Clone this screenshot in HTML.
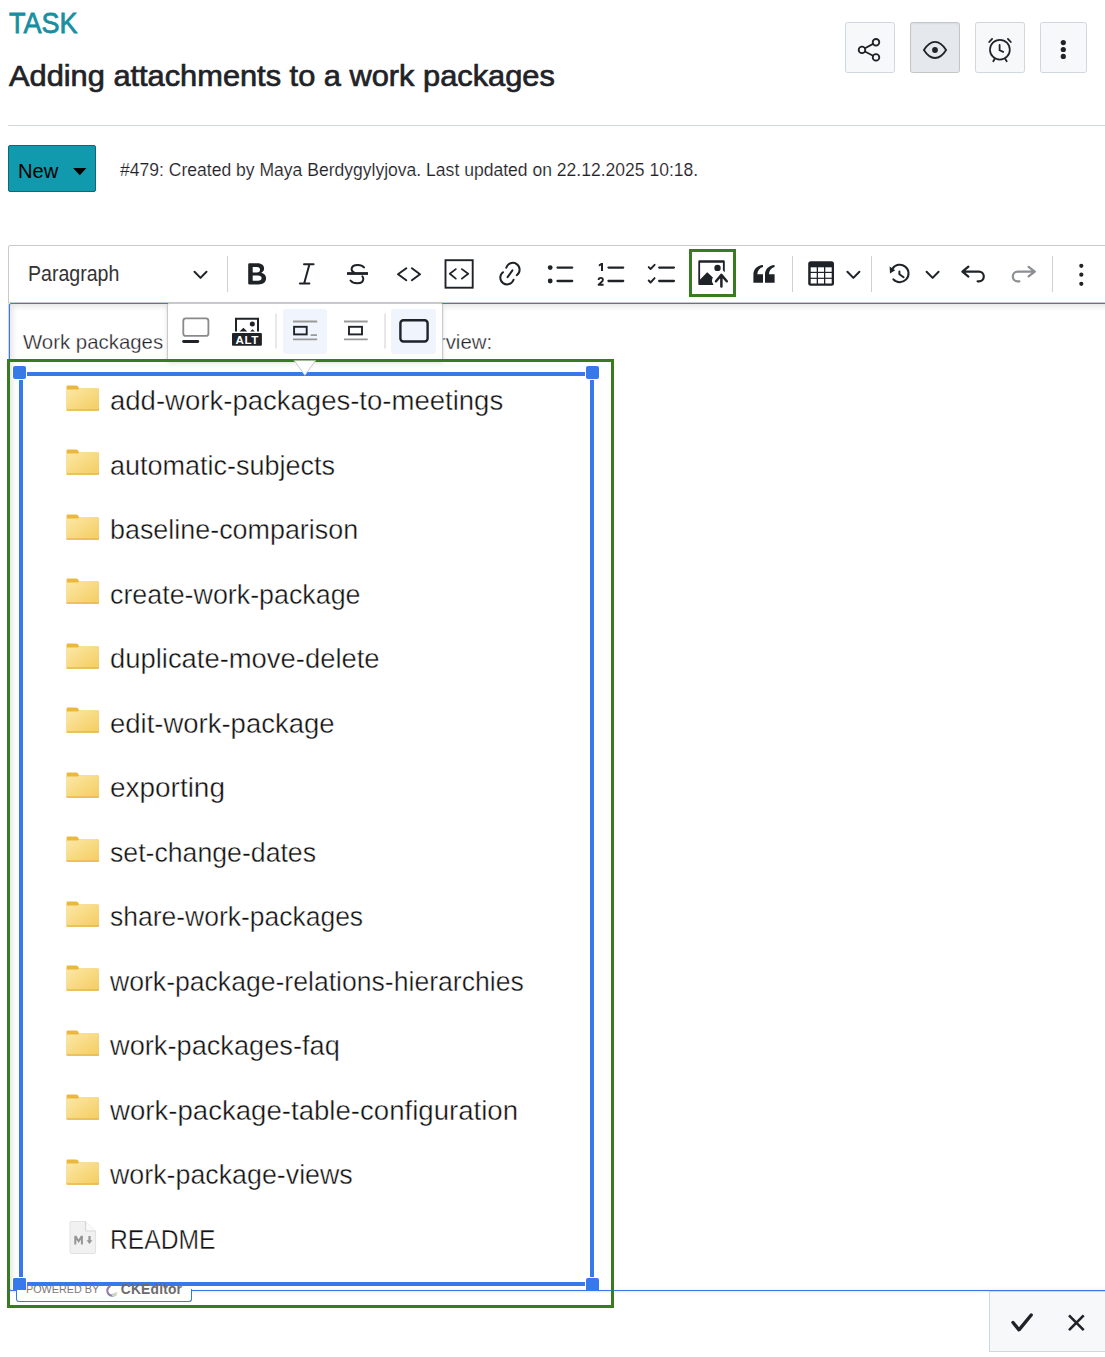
<!DOCTYPE html>
<html><head><meta charset="utf-8"><style>
html,body{margin:0;padding:0;background:#fff;}
body{width:1105px;height:1357px;overflow:hidden;position:relative;font-family:"Liberation Sans",sans-serif;}
.t{position:absolute;white-space:nowrap;transform-origin:0 0;}
.b{position:absolute;box-sizing:border-box;}
svg{position:absolute;left:0;top:0;overflow:visible;}
</style></head><body>
<div class="t" style="left:9.00px;top:4.70px;font-size:30px;line-height:36px;color:#178fa1;font-weight:400;transform:scaleX(0.9);-webkit-text-stroke:0.8px #178fa1;">TASK</div>
<div class="t" style="left:9.30px;top:58.01px;font-size:30px;line-height:36px;color:#1f2328;font-weight:400;transform:scaleX(1.026);-webkit-text-stroke:0.7px #1f2328;">Adding attachments to a work packages</div>
<div class="b" style="left:845px;top:22px;width:50px;height:51px;background:#f6f8fa;border:1px solid #d0d7de;border-radius:2.5px;"></div>
<div class="b" style="left:910px;top:22px;width:50px;height:51px;background:#e5e8ec;border:1px solid #c4c5c7;border-radius:2.5px;box-shadow:inset 0 1px 2px rgba(0,0,0,0.06);"></div>
<div class="b" style="left:975px;top:22px;width:50px;height:51px;background:#f6f8fa;border:1px solid #d0d7de;border-radius:2.5px;"></div>
<div class="b" style="left:1040px;top:22px;width:47px;height:51px;background:#f6f8fa;border:1px solid #d0d7de;border-radius:2.5px;"></div>
<div class="b" style="left:8px;top:125px;width:1097px;height:1px;background:#d1d9e0;"></div>
<div class="b" style="left:8px;top:145px;width:88px;height:47px;background:#1199ae;border:1px solid #0c6977;border-radius:2px;"></div>
<div class="t" style="left:17.50px;top:158.40px;font-size:20.5px;line-height:25px;color:#000;font-weight:400;transform:scaleX(0.98);">New</div>
<div class="t" style="left:119.50px;top:159.12px;font-size:18.7px;line-height:22px;color:#1f2328;font-weight:400;transform:scaleX(0.9385);-webkit-text-stroke:0.15px #fff;">#479: Created by Maya Berdygylyjova. Last updated on 22.12.2025 10:18.</div>
<div class="b" style="left:8px;top:245px;width:1120px;height:58px;border:1px solid #c9cacd;border-radius:2px;background:#fff;"></div>
<div class="t" style="left:28.00px;top:260.65px;font-size:21.5px;line-height:26px;color:#333;font-weight:400;transform:scaleX(0.91);">Paragraph</div>
<div class="b" style="left:8px;top:302px;width:1px;height:990px;background:#d3d4d6;"></div>
<div class="b" style="left:9px;top:303px;width:1120px;height:988px;border:1px solid #3779eb;border-radius:2px;box-shadow:2px 2px 6px rgba(0,0,0,0.12) inset;"></div>
<div class="t" style="left:23.00px;top:329.02px;font-size:21px;line-height:25px;color:#1f2328;font-weight:400;transform:scaleX(0.9708);-webkit-text-stroke:0.3px #fff;">Work packages</div>
<div class="t" style="left:405.50px;top:329.12px;font-size:21px;line-height:25px;color:#1f2328;font-weight:400;transform:scaleX(0.9708);-webkit-text-stroke:0.3px #fff;">overview:</div>
<svg width="35.4" height="27" style="left:65.1px;top:384.6px" viewBox="0 0 34 27" preserveAspectRatio="none">
<defs><linearGradient id="fg0" x1="0" y1="0" x2="1" y2="1"><stop offset="0" stop-color="#fbe7a6"/><stop offset="1" stop-color="#f4cd5f"/></linearGradient></defs>
<path d="M1.5 1.2 Q1.5 0.4 2.5 0.4 H10.5 Q11.8 0.4 12.6 1.6 L13.6 3.4 H31.5 Q32.6 3.4 32.6 4.4 V24.6 Q32.6 25.6 31.5 25.6 H2.5 Q1.5 25.6 1.5 24.6 Z" fill="#ebb83f"/>
<path d="M1.5 5.6 Q1.5 4.6 2.5 4.6 H12.4 L13.6 3.4 H31.5 Q32.6 3.4 32.6 4.4 V24.6 Q32.6 25.6 31.5 25.6 H2.5 Q1.5 25.6 1.5 24.6 Z" fill="url(#fg0)"/>
<rect x="1.5" y="24.4" width="31.1" height="1.2" fill="#e3b449"/>
</svg>
<div class="t" style="left:109.80px;top:383.16px;font-size:28.4px;line-height:34px;color:#111;font-weight:400;transform:scaleX(0.9695492957746481);-webkit-text-stroke:0.4px #fff;">add-work-packages-to-meetings</div>
<svg width="35.4" height="27" style="left:65.1px;top:449.1px" viewBox="0 0 34 27" preserveAspectRatio="none">
<defs><linearGradient id="fg1" x1="0" y1="0" x2="1" y2="1"><stop offset="0" stop-color="#fbe7a6"/><stop offset="1" stop-color="#f4cd5f"/></linearGradient></defs>
<path d="M1.5 1.2 Q1.5 0.4 2.5 0.4 H10.5 Q11.8 0.4 12.6 1.6 L13.6 3.4 H31.5 Q32.6 3.4 32.6 4.4 V24.6 Q32.6 25.6 31.5 25.6 H2.5 Q1.5 25.6 1.5 24.6 Z" fill="#ebb83f"/>
<path d="M1.5 5.6 Q1.5 4.6 2.5 4.6 H12.4 L13.6 3.4 H31.5 Q32.6 3.4 32.6 4.4 V24.6 Q32.6 25.6 31.5 25.6 H2.5 Q1.5 25.6 1.5 24.6 Z" fill="url(#fg1)"/>
<rect x="1.5" y="24.4" width="31.1" height="1.2" fill="#e3b449"/>
</svg>
<div class="t" style="left:109.80px;top:447.68px;font-size:28.4px;line-height:34px;color:#111;font-weight:400;transform:scaleX(0.9511126760563381);-webkit-text-stroke:0.4px #fff;">automatic-subjects</div>
<svg width="35.4" height="27" style="left:65.1px;top:513.6px" viewBox="0 0 34 27" preserveAspectRatio="none">
<defs><linearGradient id="fg2" x1="0" y1="0" x2="1" y2="1"><stop offset="0" stop-color="#fbe7a6"/><stop offset="1" stop-color="#f4cd5f"/></linearGradient></defs>
<path d="M1.5 1.2 Q1.5 0.4 2.5 0.4 H10.5 Q11.8 0.4 12.6 1.6 L13.6 3.4 H31.5 Q32.6 3.4 32.6 4.4 V24.6 Q32.6 25.6 31.5 25.6 H2.5 Q1.5 25.6 1.5 24.6 Z" fill="#ebb83f"/>
<path d="M1.5 5.6 Q1.5 4.6 2.5 4.6 H12.4 L13.6 3.4 H31.5 Q32.6 3.4 32.6 4.4 V24.6 Q32.6 25.6 31.5 25.6 H2.5 Q1.5 25.6 1.5 24.6 Z" fill="url(#fg2)"/>
<rect x="1.5" y="24.4" width="31.1" height="1.2" fill="#e3b449"/>
</svg>
<div class="t" style="left:109.80px;top:512.21px;font-size:28.4px;line-height:34px;color:#111;font-weight:400;transform:scaleX(0.9472676056338029);-webkit-text-stroke:0.4px #fff;">baseline-comparison</div>
<svg width="35.4" height="27" style="left:65.1px;top:578.2px" viewBox="0 0 34 27" preserveAspectRatio="none">
<defs><linearGradient id="fg3" x1="0" y1="0" x2="1" y2="1"><stop offset="0" stop-color="#fbe7a6"/><stop offset="1" stop-color="#f4cd5f"/></linearGradient></defs>
<path d="M1.5 1.2 Q1.5 0.4 2.5 0.4 H10.5 Q11.8 0.4 12.6 1.6 L13.6 3.4 H31.5 Q32.6 3.4 32.6 4.4 V24.6 Q32.6 25.6 31.5 25.6 H2.5 Q1.5 25.6 1.5 24.6 Z" fill="#ebb83f"/>
<path d="M1.5 5.6 Q1.5 4.6 2.5 4.6 H12.4 L13.6 3.4 H31.5 Q32.6 3.4 32.6 4.4 V24.6 Q32.6 25.6 31.5 25.6 H2.5 Q1.5 25.6 1.5 24.6 Z" fill="url(#fg3)"/>
<rect x="1.5" y="24.4" width="31.1" height="1.2" fill="#e3b449"/>
</svg>
<div class="t" style="left:109.80px;top:576.73px;font-size:28.4px;line-height:34px;color:#111;font-weight:400;transform:scaleX(0.9450000000000001);-webkit-text-stroke:0.4px #fff;">create-work-package</div>
<svg width="35.4" height="27" style="left:65.1px;top:642.7px" viewBox="0 0 34 27" preserveAspectRatio="none">
<defs><linearGradient id="fg4" x1="0" y1="0" x2="1" y2="1"><stop offset="0" stop-color="#fbe7a6"/><stop offset="1" stop-color="#f4cd5f"/></linearGradient></defs>
<path d="M1.5 1.2 Q1.5 0.4 2.5 0.4 H10.5 Q11.8 0.4 12.6 1.6 L13.6 3.4 H31.5 Q32.6 3.4 32.6 4.4 V24.6 Q32.6 25.6 31.5 25.6 H2.5 Q1.5 25.6 1.5 24.6 Z" fill="#ebb83f"/>
<path d="M1.5 5.6 Q1.5 4.6 2.5 4.6 H12.4 L13.6 3.4 H31.5 Q32.6 3.4 32.6 4.4 V24.6 Q32.6 25.6 31.5 25.6 H2.5 Q1.5 25.6 1.5 24.6 Z" fill="url(#fg4)"/>
<rect x="1.5" y="24.4" width="31.1" height="1.2" fill="#e3b449"/>
</svg>
<div class="t" style="left:109.80px;top:641.26px;font-size:28.4px;line-height:34px;color:#111;font-weight:400;transform:scaleX(0.9650140845070424);-webkit-text-stroke:0.4px #fff;">duplicate-move-delete</div>
<svg width="35.4" height="27" style="left:65.1px;top:707.2px" viewBox="0 0 34 27" preserveAspectRatio="none">
<defs><linearGradient id="fg5" x1="0" y1="0" x2="1" y2="1"><stop offset="0" stop-color="#fbe7a6"/><stop offset="1" stop-color="#f4cd5f"/></linearGradient></defs>
<path d="M1.5 1.2 Q1.5 0.4 2.5 0.4 H10.5 Q11.8 0.4 12.6 1.6 L13.6 3.4 H31.5 Q32.6 3.4 32.6 4.4 V24.6 Q32.6 25.6 31.5 25.6 H2.5 Q1.5 25.6 1.5 24.6 Z" fill="#ebb83f"/>
<path d="M1.5 5.6 Q1.5 4.6 2.5 4.6 H12.4 L13.6 3.4 H31.5 Q32.6 3.4 32.6 4.4 V24.6 Q32.6 25.6 31.5 25.6 H2.5 Q1.5 25.6 1.5 24.6 Z" fill="url(#fg5)"/>
<rect x="1.5" y="24.4" width="31.1" height="1.2" fill="#e3b449"/>
</svg>
<div class="t" style="left:109.80px;top:705.78px;font-size:28.4px;line-height:34px;color:#111;font-weight:400;transform:scaleX(0.9676760563380282);-webkit-text-stroke:0.4px #fff;">edit-work-package</div>
<svg width="35.4" height="27" style="left:65.1px;top:771.8px" viewBox="0 0 34 27" preserveAspectRatio="none">
<defs><linearGradient id="fg6" x1="0" y1="0" x2="1" y2="1"><stop offset="0" stop-color="#fbe7a6"/><stop offset="1" stop-color="#f4cd5f"/></linearGradient></defs>
<path d="M1.5 1.2 Q1.5 0.4 2.5 0.4 H10.5 Q11.8 0.4 12.6 1.6 L13.6 3.4 H31.5 Q32.6 3.4 32.6 4.4 V24.6 Q32.6 25.6 31.5 25.6 H2.5 Q1.5 25.6 1.5 24.6 Z" fill="#ebb83f"/>
<path d="M1.5 5.6 Q1.5 4.6 2.5 4.6 H12.4 L13.6 3.4 H31.5 Q32.6 3.4 32.6 4.4 V24.6 Q32.6 25.6 31.5 25.6 H2.5 Q1.5 25.6 1.5 24.6 Z" fill="url(#fg6)"/>
<rect x="1.5" y="24.4" width="31.1" height="1.2" fill="#e3b449"/>
</svg>
<div class="t" style="left:109.80px;top:770.31px;font-size:28.4px;line-height:34px;color:#111;font-weight:400;transform:scaleX(0.9842394366197182);-webkit-text-stroke:0.4px #fff;">exporting</div>
<svg width="35.4" height="27" style="left:65.1px;top:836.3px" viewBox="0 0 34 27" preserveAspectRatio="none">
<defs><linearGradient id="fg7" x1="0" y1="0" x2="1" y2="1"><stop offset="0" stop-color="#fbe7a6"/><stop offset="1" stop-color="#f4cd5f"/></linearGradient></defs>
<path d="M1.5 1.2 Q1.5 0.4 2.5 0.4 H10.5 Q11.8 0.4 12.6 1.6 L13.6 3.4 H31.5 Q32.6 3.4 32.6 4.4 V24.6 Q32.6 25.6 31.5 25.6 H2.5 Q1.5 25.6 1.5 24.6 Z" fill="#ebb83f"/>
<path d="M1.5 5.6 Q1.5 4.6 2.5 4.6 H12.4 L13.6 3.4 H31.5 Q32.6 3.4 32.6 4.4 V24.6 Q32.6 25.6 31.5 25.6 H2.5 Q1.5 25.6 1.5 24.6 Z" fill="url(#fg7)"/>
<rect x="1.5" y="24.4" width="31.1" height="1.2" fill="#e3b449"/>
</svg>
<div class="t" style="left:109.80px;top:834.83px;font-size:28.4px;line-height:34px;color:#111;font-weight:400;transform:scaleX(0.9391830985915492);-webkit-text-stroke:0.4px #fff;">set-change-dates</div>
<svg width="35.4" height="27" style="left:65.1px;top:900.8px" viewBox="0 0 34 27" preserveAspectRatio="none">
<defs><linearGradient id="fg8" x1="0" y1="0" x2="1" y2="1"><stop offset="0" stop-color="#fbe7a6"/><stop offset="1" stop-color="#f4cd5f"/></linearGradient></defs>
<path d="M1.5 1.2 Q1.5 0.4 2.5 0.4 H10.5 Q11.8 0.4 12.6 1.6 L13.6 3.4 H31.5 Q32.6 3.4 32.6 4.4 V24.6 Q32.6 25.6 31.5 25.6 H2.5 Q1.5 25.6 1.5 24.6 Z" fill="#ebb83f"/>
<path d="M1.5 5.6 Q1.5 4.6 2.5 4.6 H12.4 L13.6 3.4 H31.5 Q32.6 3.4 32.6 4.4 V24.6 Q32.6 25.6 31.5 25.6 H2.5 Q1.5 25.6 1.5 24.6 Z" fill="url(#fg8)"/>
<rect x="1.5" y="24.4" width="31.1" height="1.2" fill="#e3b449"/>
</svg>
<div class="t" style="left:109.80px;top:899.36px;font-size:28.4px;line-height:34px;color:#111;font-weight:400;transform:scaleX(0.9325774647887324);-webkit-text-stroke:0.4px #fff;">share-work-packages</div>
<svg width="35.4" height="27" style="left:65.1px;top:965.3px" viewBox="0 0 34 27" preserveAspectRatio="none">
<defs><linearGradient id="fg9" x1="0" y1="0" x2="1" y2="1"><stop offset="0" stop-color="#fbe7a6"/><stop offset="1" stop-color="#f4cd5f"/></linearGradient></defs>
<path d="M1.5 1.2 Q1.5 0.4 2.5 0.4 H10.5 Q11.8 0.4 12.6 1.6 L13.6 3.4 H31.5 Q32.6 3.4 32.6 4.4 V24.6 Q32.6 25.6 31.5 25.6 H2.5 Q1.5 25.6 1.5 24.6 Z" fill="#ebb83f"/>
<path d="M1.5 5.6 Q1.5 4.6 2.5 4.6 H12.4 L13.6 3.4 H31.5 Q32.6 3.4 32.6 4.4 V24.6 Q32.6 25.6 31.5 25.6 H2.5 Q1.5 25.6 1.5 24.6 Z" fill="url(#fg9)"/>
<rect x="1.5" y="24.4" width="31.1" height="1.2" fill="#e3b449"/>
</svg>
<div class="t" style="left:109.80px;top:963.88px;font-size:28.4px;line-height:34px;color:#111;font-weight:400;transform:scaleX(0.9365211267605634);-webkit-text-stroke:0.4px #fff;">work-package-relations-hierarchies</div>
<svg width="35.4" height="27" style="left:65.1px;top:1029.8px" viewBox="0 0 34 27" preserveAspectRatio="none">
<defs><linearGradient id="fg10" x1="0" y1="0" x2="1" y2="1"><stop offset="0" stop-color="#fbe7a6"/><stop offset="1" stop-color="#f4cd5f"/></linearGradient></defs>
<path d="M1.5 1.2 Q1.5 0.4 2.5 0.4 H10.5 Q11.8 0.4 12.6 1.6 L13.6 3.4 H31.5 Q32.6 3.4 32.6 4.4 V24.6 Q32.6 25.6 31.5 25.6 H2.5 Q1.5 25.6 1.5 24.6 Z" fill="#ebb83f"/>
<path d="M1.5 5.6 Q1.5 4.6 2.5 4.6 H12.4 L13.6 3.4 H31.5 Q32.6 3.4 32.6 4.4 V24.6 Q32.6 25.6 31.5 25.6 H2.5 Q1.5 25.6 1.5 24.6 Z" fill="url(#fg10)"/>
<rect x="1.5" y="24.4" width="31.1" height="1.2" fill="#e3b449"/>
</svg>
<div class="t" style="left:109.80px;top:1028.41px;font-size:28.4px;line-height:34px;color:#111;font-weight:400;transform:scaleX(0.9583098591549296);-webkit-text-stroke:0.4px #fff;">work-packages-faq</div>
<svg width="35.4" height="27" style="left:65.1px;top:1094.4px" viewBox="0 0 34 27" preserveAspectRatio="none">
<defs><linearGradient id="fg11" x1="0" y1="0" x2="1" y2="1"><stop offset="0" stop-color="#fbe7a6"/><stop offset="1" stop-color="#f4cd5f"/></linearGradient></defs>
<path d="M1.5 1.2 Q1.5 0.4 2.5 0.4 H10.5 Q11.8 0.4 12.6 1.6 L13.6 3.4 H31.5 Q32.6 3.4 32.6 4.4 V24.6 Q32.6 25.6 31.5 25.6 H2.5 Q1.5 25.6 1.5 24.6 Z" fill="#ebb83f"/>
<path d="M1.5 5.6 Q1.5 4.6 2.5 4.6 H12.4 L13.6 3.4 H31.5 Q32.6 3.4 32.6 4.4 V24.6 Q32.6 25.6 31.5 25.6 H2.5 Q1.5 25.6 1.5 24.6 Z" fill="url(#fg11)"/>
<rect x="1.5" y="24.4" width="31.1" height="1.2" fill="#e3b449"/>
</svg>
<div class="t" style="left:109.80px;top:1092.93px;font-size:28.4px;line-height:34px;color:#111;font-weight:400;transform:scaleX(0.9720140845070423);-webkit-text-stroke:0.4px #fff;">work-package-table-configuration</div>
<svg width="35.4" height="27" style="left:65.1px;top:1158.9px" viewBox="0 0 34 27" preserveAspectRatio="none">
<defs><linearGradient id="fg12" x1="0" y1="0" x2="1" y2="1"><stop offset="0" stop-color="#fbe7a6"/><stop offset="1" stop-color="#f4cd5f"/></linearGradient></defs>
<path d="M1.5 1.2 Q1.5 0.4 2.5 0.4 H10.5 Q11.8 0.4 12.6 1.6 L13.6 3.4 H31.5 Q32.6 3.4 32.6 4.4 V24.6 Q32.6 25.6 31.5 25.6 H2.5 Q1.5 25.6 1.5 24.6 Z" fill="#ebb83f"/>
<path d="M1.5 5.6 Q1.5 4.6 2.5 4.6 H12.4 L13.6 3.4 H31.5 Q32.6 3.4 32.6 4.4 V24.6 Q32.6 25.6 31.5 25.6 H2.5 Q1.5 25.6 1.5 24.6 Z" fill="url(#fg12)"/>
<rect x="1.5" y="24.4" width="31.1" height="1.2" fill="#e3b449"/>
</svg>
<div class="t" style="left:109.80px;top:1157.46px;font-size:28.4px;line-height:34px;color:#111;font-weight:400;transform:scaleX(0.9439154929577466);-webkit-text-stroke:0.4px #fff;">work-package-views</div>
<svg width="30" height="36" style="left:68px;top:1219.8px" viewBox="0 0 30 36">
<path d="M2.5 1.5 H17.5 L27.5 11 V32 Q27.5 33.5 26 33.5 H3.5 Q2 33.5 2 32 V2.5 Q2 1.5 3 1.5 Z" fill="#f1f1f1" stroke="#e2e2e2" stroke-width="1"/>
<path d="M17.5 1.5 V9.5 Q17.5 11 19 11 H27.5" fill="#fafafa" stroke="#d6d6d6" stroke-width="1.2"/>
<path transform="translate(0 0.9)" d="M6.3 23.6 V14.8 H8.4 L10.6 18.6 L12.8 14.8 H14.9 V23.6 H12.9 V18.5 L10.6 22.2 L8.3 18.5 V23.6 Z" fill="#959595"/>
<path transform="translate(0 0.9)" d="M20.4 15.2 V19.4 H18.6 L21.5 23 L24.4 19.4 H22.6 V15.2 Z" fill="#959595"/>
</svg>
<div class="t" style="left:110.20px;top:1221.98px;font-size:28.4px;line-height:34px;color:#111;font-weight:400;transform:scaleX(0.8679014084507042);-webkit-text-stroke:0.4px #fff;">README</div>
<div class="b" style="left:27px;top:372px;width:558px;height:4px;background:#3779eb;"></div>
<div class="b" style="left:27px;top:1282px;width:558px;height:4px;background:#3779eb;"></div>
<div class="b" style="left:19px;top:380px;width:4px;height:897px;background:#3779eb;"></div>
<div class="b" style="left:590px;top:380px;width:4px;height:897px;background:#3779eb;"></div>
<div class="b" style="left:13px;top:366px;width:13px;height:13px;background:#3779eb;border-radius:2px;box-shadow:0 0 0 1px rgba(255,255,255,0.8);"></div>
<div class="b" style="left:586px;top:366px;width:13px;height:13px;background:#3779eb;border-radius:2px;box-shadow:0 0 0 1px rgba(255,255,255,0.8);"></div>
<div class="b" style="left:13px;top:1278px;width:13px;height:12px;background:#3779eb;border-radius:2px 2px 0 0;box-shadow:0 0 0 1px rgba(255,255,255,0.8);"></div>
<div class="b" style="left:586px;top:1278px;width:13px;height:12px;background:#3779eb;border-radius:2px 2px 0 0;box-shadow:0 0 0 1px rgba(255,255,255,0.8);"></div>
<div class="b" style="left:9px;top:1291px;width:1100px;height:20px;background:#fff;"></div>
<div class="b" style="left:9px;top:1290px;width:1100px;height:1px;background:#3779eb;"></div>
<div class="b" style="left:9px;top:1291px;width:1100px;height:2px;background:linear-gradient(#e3e4e6,#fff);"></div>
<div class="b" style="left:16px;top:1289px;width:176px;height:13px;border:1px solid #3779eb;border-top:none;border-radius:0 0 3px 3px;background:#fff;"></div>
<div class="b" style="left:13px;top:1278px;width:13px;height:12px;background:#3779eb;border-radius:2px 2px 0 0;"></div>
<div class="b" style="left:27px;top:1282px;width:558px;height:4px;background:#3779eb;"></div>
<div class="t" style="left:25.50px;top:1284.24px;font-size:10px;line-height:12px;color:#7a7a7a;font-weight:400;transform:scaleX(1.08);">POWERED BY</div>
<div class="b" style="left:989px;top:1291px;width:130px;height:61px;background:#f6f8fa;border:1px solid #d0d7de;"></div>
<div class="b" style="left:167px;top:303px;width:276px;height:58px;background:#fff;border:1px solid #c9cacd;border-radius:2px;box-shadow:0 1px 2px rgba(0,0,0,0.12),0 3px 6px rgba(0,0,0,0.08);"></div>
<div class="b" style="left:283px;top:309px;width:44px;height:45px;background:#f0f5fd;border-radius:3px;"></div>
<div class="b" style="left:391px;top:309px;width:45px;height:45px;background:#f0f5fd;border-radius:3px;"></div>
<div class="b" style="left:689px;top:249px;width:47px;height:48px;border:3px solid #387c22;"></div>
<div class="b" style="left:7px;top:359px;width:607px;height:949px;border:3px solid #387c22;"></div>
<svg width="1105" height="1357" viewBox="0 0 1105 1357"><g fill="none" stroke="#1f2328" stroke-width="1.8" stroke-linecap="round"><circle cx="862" cy="49.9" r="3.3"/><circle cx="876" cy="42.3" r="3.3"/><circle cx="876" cy="57.4" r="3.3"/><path d="M864.9 48.3 L873.1 43.9 M864.9 51.5 L873.1 55.8"/><path d="M923.9 50 C927 45 931 41.8 935 41.8 C939 41.8 943 45 946.1 50 C943 55 939 58 935 58 C931 58 927 55 923.9 50 Z"/><circle cx="999.9" cy="49.7" r="9.9" stroke-width="1.7"/><path d="M989.2 42 L992.1 38.9 M1007.9 38.9 L1010.8 42 M999.6 45 V50.2 L1003.2 51.9 M994.6 59 L993.3 61.2 M1005.3 59 L1006.7 61.2"/></g><g fill="#1f2328"><circle cx="935" cy="50" r="2.9"/><circle cx="1063.3" cy="42.6" r="2.6"/><circle cx="1063.3" cy="49.5" r="2.6"/><circle cx="1063.3" cy="56.4" r="2.6"/></g><path d="M73 168 H86.5 L79.75 175.2 Z" fill="#000"/><rect x="227.0" y="256" width="1" height="36" fill="#cfd0d2"/><rect x="792.0" y="256" width="1" height="36" fill="#cfd0d2"/><rect x="871.0" y="256" width="1" height="36" fill="#cfd0d2"/><rect x="1052.0" y="256" width="1" height="36" fill="#cfd0d2"/><path d="M194.5 271.8 L200.5 277.9 L206.5 271.8" fill="none" stroke="#1f2328" stroke-width="2" stroke-linecap="round" stroke-linejoin="round"/><path d="M847.4 271.8 L853.4 277.9 L859.4 271.8" fill="none" stroke="#1f2328" stroke-width="2" stroke-linecap="round" stroke-linejoin="round"/><path d="M926.6 271.8 L932.6 277.9 L938.6 271.8" fill="none" stroke="#1f2328" stroke-width="2" stroke-linecap="round" stroke-linejoin="round"/><path fill="#1f2328" fill-rule="evenodd" d="M248.2 264.6 Q248.2 263.3 249.5 263.3 H257.4 C261.9 263.3 264.1 265.6 264.1 268.6 C264.1 270.6 263 272 261.3 272.8 C263.9 273.4 266.1 275.3 266.1 278.3 C266.1 282.1 263.3 284.5 258.3 284.5 H249.5 Q248.2 284.5 248.2 283.2 Z M252.7 267.1 V272.4 H257 C258.9 272.4 260 271.4 260 269.7 C260 268 258.9 267.1 257 267.1 Z M252.7 275.5 V280.8 H257.9 C260.3 280.8 261.6 279.8 261.6 278.1 C261.6 276.4 260.3 275.5 257.9 275.5 Z"/><path fill="none" stroke="#1f2328" stroke-width="2" stroke-linecap="round" d="M304 264.3 H313.6 M299.9 283.5 H309.4 M309.4 264.6 L304.2 283.2"/><path fill="none" stroke="#1f2328" stroke-width="2" stroke-linecap="round" d="M364 267.4 C362.5 265.6 360.5 264.9 358 264.9 C354 264.9 351.6 266.8 351.6 269.3 C351.6 270.9 352.7 271.9 354.3 272.6 M362.4 276.3 C363 277 363.3 277.8 363.3 278.8 C363.3 281.5 360.9 283.3 357.2 283.3 C354.2 283.3 351.8 282.2 350.5 280.5"/><rect x="347" y="272.1" width="21" height="2.8" fill="#1f2328"/><path fill="none" stroke="#1f2328" stroke-width="2" stroke-linecap="round" stroke-linejoin="round" d="M406.3 268.3 L398 274.2 L406.3 280.2 M411.9 268.3 L420 274.2 L411.9 280.2"/><rect x="445.5" y="260.2" width="27.2" height="27.5" fill="none" stroke="#1f2328" stroke-width="1.9"/><path fill="none" stroke="#1f2328" stroke-width="1.8" stroke-linecap="round" stroke-linejoin="round" d="M455.8 269.1 L449.8 273.8 L455.8 278.6 M461.9 269.1 L468.2 273.8 L461.9 278.6"/><g fill="none" stroke="#1f2328" stroke-width="2" stroke-linecap="round"><path d="M506.26 267.85 A6.8 6.8 0 1 1 516.74 275.24"/><path d="M513.54 279.78 A6.8 6.8 0 1 1 502.98 272.19"/><path d="M507.6 277.2 L512.4 270.4"/></g><g fill="#1f2328"><circle cx="550.2" cy="267.6" r="2.4"/><circle cx="550.2" cy="281" r="2.4"/></g><path d="M557.5 267.6 H572.2 M557.5 281 H572.2 M608.5 267.6 H623.2 M608.5 281 H623.2 M659.2 267.6 H673.9 M659.2 281 H673.9" stroke="#1f2328" stroke-width="2.3" stroke-linecap="round"/><path fill="#1f2328" d="M598.8 264.5 L601.2 263 H603 V270.9 H601 V265.4 L598.8 266.5 Z"/><path fill="none" stroke="#1f2328" stroke-width="1.9" stroke-linejoin="round" d="M598.6 280.1 C598.6 278.6 599.6 277.9 600.8 277.9 C602 277.9 602.9 278.6 602.9 279.9 C602.9 281.5 600.5 282.6 598.6 284.7 H603.6"/><path fill="none" stroke="#1f2328" stroke-width="1.9" stroke-linecap="round" stroke-linejoin="round" d="M648.7 267.1 L650.6 269 L654.6 264.8 M648.7 280.5 L650.6 282.5 L654.6 278.1"/><g fill="#1f2328"><path d="M698.3 261.4 Q698.3 260.3 699.4 260.3 H723.7 Q724.8 260.3 724.8 261.4 V272.2 L722.9 270.6 V262.8 H700.1 V279.5 L707.2 272.2 L712.9 277.5 C711.8 279.2 711.6 281.9 712.9 283.5 L713.4 285 H699.4 Q698.3 285 698.3 283.9 Z"/><circle cx="717.5" cy="267.9" r="3.2"/></g><path fill="none" stroke="#1f2328" stroke-width="2.5" stroke-linecap="round" stroke-linejoin="round" d="M721.4 286.6 V275.6 M716 281.2 L721.4 274.9 L726.8 281.2"/><g fill="#1f2328"><path d="M753.4 282.8 V274.6 C753.4 269.3 756.8 265.6 763 265 V266.9 C759.4 267.9 757.5 270.7 757.3 274.3 H763 V282.8 Z"/><path d="M765 282.8 V274.6 C765 269.3 768.4 265.6 774.6 265 V266.9 C771 267.9 769.1 270.7 768.9 274.3 H774.6 V282.8 Z"/></g><rect x="808.2" y="261.2" width="25.8" height="24.5" rx="2.5" fill="#1f2328"/><g fill="#fff"><rect x="810.7" y="267.3" width="6" height="4.5"/><rect x="818" y="267.3" width="6" height="4.5"/><rect x="825.3" y="267.3" width="6.4" height="4.5"/><rect x="810.7" y="273" width="6" height="4.7"/><rect x="818" y="273" width="6" height="4.7"/><rect x="825.3" y="273" width="6.4" height="4.7"/><rect x="810.7" y="278.9" width="6" height="4.6"/><rect x="818" y="278.9" width="6" height="4.6"/><rect x="825.3" y="278.9" width="6.4" height="4.6"/></g><g fill="none" stroke="#1f2328" stroke-width="2" stroke-linecap="round" stroke-linejoin="round"><path d="M893.4 279.3 A8.7 8.7 0 1 0 892.6 268.6"/><path d="M899.4 271.4 V274.3 L903.6 277.2"/></g><path fill="#1f2328" d="M889.6 266.6 L895.2 270.2 L890 273.6 Z"/><path fill="none" stroke="#1f2328" stroke-width="2.2" stroke-linecap="round" stroke-linejoin="round" d="M968.4 266.6 L962.4 271.7 L968.4 276.6 M962.8 271.7 H979 A4.8 4.8 0 0 1 979 281.3 H977.6"/><path fill="none" stroke="#8b8e92" stroke-width="2.2" stroke-linecap="round" stroke-linejoin="round" d="M1028.6 266.9 L1034.8 271.7 L1028.6 276.4 M1034.4 271.7 H1017.6 A4.8 4.8 0 0 0 1017.6 281.3 H1019.4"/><g fill="#1f2328"><circle cx="1081.3" cy="265.8" r="2.1"/><circle cx="1081.3" cy="274.7" r="2.1"/><circle cx="1081.3" cy="283.8" r="2.1"/></g><rect x="183.3" y="318.4" width="25.1" height="17.5" rx="2.5" fill="none" stroke="#8a8a8a" stroke-width="1.8"/><path d="M183.6 341.5 H197.8" stroke="#1f2328" stroke-width="2.8" stroke-linecap="round"/><path fill="none" stroke="#1f2328" stroke-width="2" d="M236 331.5 V318.7 H258 V331.5"/><g fill="#1f2328"><circle cx="252.3" cy="324" r="2.5"/><path d="M239.5 331.6 L243.4 327.8 L247.3 331.6 Z M250.2 331.6 L252.5 329.2 L254.8 331.6 Z"/><rect x="232" y="333" width="29.9" height="12.7" rx="1"/></g><text x="247.2" y="343.7" text-anchor="middle" font-family="Liberation Sans" font-weight="700" font-size="11.6" fill="#fff" letter-spacing="0.5">ALT</text><rect x="395" y="331" width="1" height="1" fill="none"/><path d="M276 313.5 V348.5 M385 313.5 V348.5" stroke="#cfd0d2" stroke-width="1"/><path d="M293 321.5 H317.2 M293 339.3 H317.2 M310.7 335.2 H317 M344 321.5 H367.7 M344 339.3 H367.7" stroke="#999" stroke-width="1.8"/><rect x="294.1" y="326.8" width="12.6" height="7.6" fill="none" stroke="#1f2328" stroke-width="1.9"/><rect x="349" y="326.8" width="13" height="7.6" fill="none" stroke="#1f2328" stroke-width="1.9"/><rect x="400.4" y="320.2" width="27.2" height="21.3" rx="3" fill="none" stroke="#1f2328" stroke-width="2.4"/><path d="M294.2 360.5 L304.9 375.3 L315.6 360.5" fill="#fff" stroke="#c9cacd" stroke-width="1"/><path d="M110.5 1286 A5 5 0 1 0 115.8 1294.2" fill="none" stroke="#8f80a8" stroke-width="2.2"/><path d="M112.5 1293.5 L117.5 1292 L116 1296 L111.8 1296.3 Z" fill="#cbd5c2"/><text x="120.8" y="1294.3" font-family="Liberation Sans" font-weight="700" font-size="13.8" fill="#6b6b6b" letter-spacing="0.2">CKEditor</text><path d="M1013 1322.5 L1019 1329.8 L1031.2 1315" fill="none" stroke="#1f2328" stroke-width="3.4" stroke-linecap="round" stroke-linejoin="round"/><path d="M1069 1315.3 L1083.7 1330.2 M1083.7 1315.3 L1069 1330.2" stroke="#1f2328" stroke-width="2.6"/></svg>
</body></html>
